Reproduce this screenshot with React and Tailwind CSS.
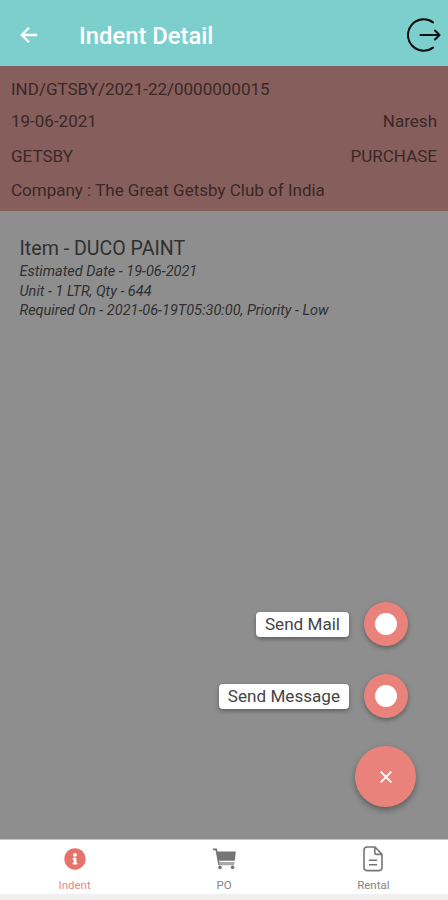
import { FaInfoCircle } from 'react-icons/fa';

const indent = {
    number: 'IND/GTSBY/2021-22/0000000015',
    date: '19-06-2021',
    user: 'Naresh',
    site: 'GETSBY',
    department: 'PURCHASE',
    company: 'The Great Getsby Club of India',
    items: [
        {
            name: 'DUCO PAINT',
            estimatedDate: '19-06-2021',
            unit: '1 LTR',
            qty: 644,
            requiredOn: '2021-06-19T05:30:00',
            priority: 'Low',
        },
    ],
};

const BackIcon = () => (
    <svg className="w-[18px] h-[18px]" viewBox="0 0 18 18" fill="none" stroke="currentColor" strokeWidth="2.3">
        <path d="M17.2 9H2.2M9 1.8L1.8 9L9 16.2" />
    </svg>
);

const LogoutIcon = () => (
    <svg className="w-[34px] h-[34px]" viewBox="0 0 34 34" fill="none" stroke="currentColor" strokeWidth="2.1" strokeLinecap="round" strokeLinejoin="round">
        <path d="M26 4.4A15.7 15.7 0 1 0 26 29.6" />
        <path d="M13.5 17H32.3M28 12.5L32.5 17L28 21.5" />
    </svg>
);

const CloseIcon = () => (
    <svg className="w-3 h-3" viewBox="0 0 12 12" stroke="currentColor" strokeWidth="1.9">
        <path d="M0.7 0.7L11.3 11.3M11.3 0.7L0.7 11.3" />
    </svg>
);

const CartIcon = () => (
    <svg className="w-6 h-[22px]" viewBox="0 0 24 22" fill="none">
        <path d="M4.8 3.6H23.8L22.8 12.8H6.6Z" fill="#757575" />
        <path d="M0.8 1.4H4.2L7.2 17" stroke="#757575" strokeWidth="1.7" />
        <path d="M7 14.1H22.6L22 17.2H7.4Z" fill="#a8a8a8" />
        <circle cx="8" cy="19.4" r="1.8" fill="#757575" />
        <circle cx="20.6" cy="19.4" r="1.8" fill="#757575" />
    </svg>
);

const DocumentIcon = () => (
    <svg className="w-5 h-[26px]" viewBox="0 0 20 26" fill="none" stroke="#757575" strokeWidth="1.6" strokeLinejoin="round">
        <path d="M4.2 1H12L19 8.4V21.6Q19 24.6 16 24.6H4Q1 24.6 1 21.6V4.2Q1 1 4.2 1Z" />
        <path d="M11.8 1.4V6.3Q11.8 8.4 13.9 8.4H18.6" />
        <path d="M6 14.2H14M6 18.8H14" />
    </svg>
);

const SpeedDialAction = ({ label }) => (
    <div className="flex items-center gap-[15px]">
        <span className="h-[25px] px-[9px] pt-px flex items-center bg-white rounded-[4px] shadow-[0_2px_4px_rgba(0,0,0,0.35)] text-[17.1px] text-[#444] whitespace-nowrap">{label}</span>
        <button className="w-11 h-11 flex items-center justify-center rounded-full bg-[#e8827b] shadow-[0_2px_5px_rgba(0,0,0,0.35)]">
            <span className="w-[22px] h-[22px] rounded-full bg-white" />
        </button>
    </div>
);

const Tab = ({ icon, label, active }) => (
    <button className={`flex-1 flex flex-col items-center text-[11.5px] leading-[14px] ${active ? 'text-[#e58a84]' : 'text-[#858585]'}`}>
        <span className="h-[38px] pb-px flex items-center justify-center">{icon}</span>
        <span>{label}</span>
    </button>
);

const App = () => {
    return (
        <div className="relative w-full h-[900px] flex flex-col overflow-hidden bg-[#8e8e8e] font-[Roboto,sans-serif]">

            {/* header */}
            <header className="h-[66px] shrink-0 pt-1 pl-5 pr-[7px] flex items-center bg-[#7dcfce] text-white">
                <BackIcon />
                <h1 className="flex-1 ml-[41px] pt-[3px] text-[23.8px] font-medium">Indent Detail</h1>
                <span className="text-[#111]"><LogoutIcon /></span>
            </header>

            {/* indent summary */}
            <section className="h-[145px] shrink-0 px-[11px] pt-[11px] bg-[#865e5b] text-[17px] leading-6 text-[#3b2827]">
                <p>{indent.number}</p>
                <div className="mt-2 flex justify-between">
                    <span>{indent.date}</span>
                    <span>{indent.user}</span>
                </div>
                <div className="mt-[11px] flex justify-between">
                    <span>{indent.site}</span>
                    <span>{indent.department}</span>
                </div>
                <p className="mt-[10px]">Company : {indent.company}</p>
            </section>

            {/* items */}
            <main className="flex-1 px-[19.5px] pt-[26px] text-[#303030]">
                {indent.items.map((item, i) => (
                    <div key={i}>
                        <h2 className="text-[19.6px] leading-6">Item - {item.name}</h2>
                        <div className="pt-px text-[14.5px] leading-[19.5px] italic">
                            <p>Estimated Date - {item.estimatedDate}</p>
                            <p>Unit - {item.unit}, Qty - {item.qty}</p>
                            <p>Required On - {item.requiredOn}, Priority - {item.priority}</p>
                        </div>
                    </div>
                ))}
            </main>

            {/* speed dial */}
            <div className="absolute right-8 bottom-[93px] flex flex-col items-end">
                <div className="mr-2 mb-7 flex flex-col items-end gap-7">
                    <SpeedDialAction label="Send Mail" />
                    <SpeedDialAction label="Send Message" />
                </div>
                <button className="w-[61px] h-[61px] flex items-center justify-center rounded-full bg-[#e8827b] text-white shadow-[0_3px_6px_rgba(0,0,0,0.35)]">
                    <CloseIcon />
                </button>
            </div>

            {/* bottom tabs */}
            <nav className="h-[61px] shrink-0 flex bg-white border-t border-[#c4c4c4] border-b-[6px] border-b-[#f0f0f0]">
                <Tab active icon={<FaInfoCircle className="w-[22px] h-[22px] text-[#e5736c]" />} label="Indent" />
                <Tab icon={<CartIcon />} label="PO" />
                <Tab icon={<DocumentIcon />} label="Rental" />
            </nav>
        </div>
    );
};

export default App;
